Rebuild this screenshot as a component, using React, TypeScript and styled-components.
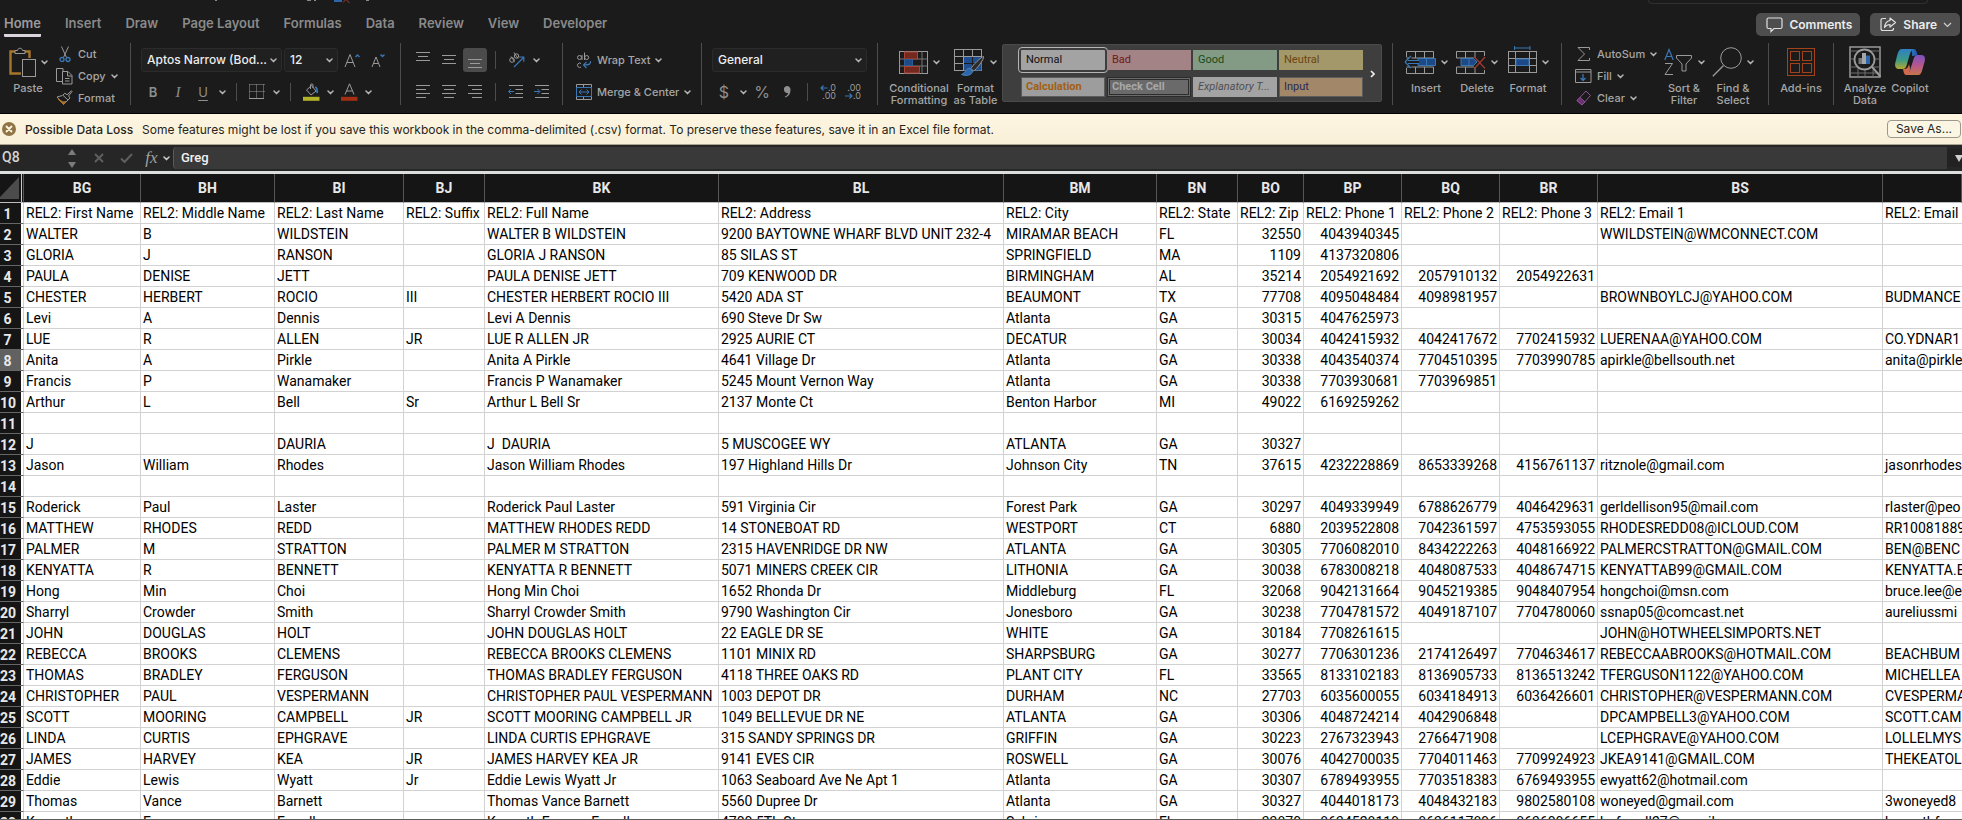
import React from "react";
import styled, { createGlobalStyle, css } from "styled-components";

const UI = `Inter, "Liberation Sans", sans-serif`;
const TEXT = `Roboto, "Liberation Sans", sans-serif`;
const LINE = "#9a9a9a";
const BLUE = "#3a77b5";
const FILL_BLUE = "#1d4a86";

const Global = createGlobalStyle`
  *, *::before, *::after { box-sizing: border-box; }
  html, body { margin: 0; height: 100%; overflow: hidden; background: #1b1b1b; }
  #root { height: 100%; }
  button, select, input { font: inherit; color: inherit; margin: 0; }
  svg { display: block; flex: none; }
`;

const Window = styled.div`
  display: flex;
  flex-direction: column;
  height: 100vh;
  overflow: hidden;
  background: #1b1b1b;
  color: #a6a6a6;
  font-family: ${UI};
`;

/* ---------- title strip and tabs ---------- */

const TitleStrip = styled.div`
  display: flex;
  flex: none;
  height: 4px;
  justify-content: space-between;
  align-items: flex-start;
`;

const SearchEdge = styled.div`
  width: 280px;
  height: 4px;
  margin-right: 34px;
  border: 1px solid #303030;
  border-top: 0;
  border-radius: 0 0 5px 5px;
`;

const TabBar = styled.nav`
  display: flex;
  flex: none;
  height: 39px;
  padding: 9px 2px 0 4px;
  align-items: flex-start;
`;

const TabList = styled.div`
  display: flex;
  gap: 24px;
  flex: 1;
`;

const Tab = styled.button<{ $active?: boolean }>`
  height: 24px;
  padding: 0;
  border: 0;
  border-bottom: 3px solid ${(p) => (p.$active ? "#d9d5da" : "transparent")};
  border-radius: 1px;
  background: none;
  font-size: 13px;
  line-height: 21px;
  font-weight: 600;
  color: ${(p) => (p.$active ? "#9c9a9c" : "#8a8a8a")};
`;

const HeaderButton = styled.button`
  display: flex;
  align-items: center;
  gap: 6px;
  height: 23px;
  margin-left: 10px;
  padding: 0 8px 0 10px;
  border: 0;
  border-radius: 5px;
  background: #4e4e4e;
  color: #ececec;
  font-size: 12px;
  font-weight: 600;
`;

/* ---------- ribbon ---------- */

const Ribbon = styled.div`
  display: flex;
  flex: none;
  height: 71px;
  border-bottom: 1px solid #000;
  overflow: hidden;
`;

const Group = styled.div<{ $w: number; $pl: number; $gap?: number; $last?: boolean }>`
  display: flex;
  flex: none;
  align-items: flex-start;
  width: ${(p) => p.$w}px;
  padding-left: ${(p) => p.$pl}px;
  gap: ${(p) => p.$gap ?? 0}px;
  height: 62px;
  border-right: 1px solid ${(p) => (p.$last ? "transparent" : "#4c4c4c")};
`;

const Rows = styled.div`
  display: flex;
  flex-direction: column;
  gap: 8px;
  padding-top: 5px;
`;

const Row = styled.div<{ $gap: number }>`
  display: flex;
  align-items: center;
  height: 24px;
  gap: ${(p) => p.$gap}px;
`;

const Stack = styled.div<{ $w: number }>`
  display: flex;
  flex-direction: column;
  flex: none;
  width: ${(p) => p.$w}px;
`;

const plainButton = css`
  padding: 0;
  border: 0;
  background: none;
`;

const BigButton = styled.button<{ $w: number }>`
  ${plainButton}
  display: flex;
  flex: none;
  flex-direction: column;
  align-items: center;
  width: ${(p) => p.$w}px;
  padding-top: 3px;
  font-size: 11px;
  font-weight: 500;
  line-height: 12px;
  color: #a6a6a6;
`;

const BigIcon = styled.span`
  display: flex;
  align-items: center;
  gap: 5px;
  height: 32px;
  margin-bottom: 4px;
`;

const MiniButton = styled.button<{ $h?: number }>`
  ${plainButton}
  display: flex;
  align-items: center;
  height: ${(p) => p.$h ?? 22}px;
  gap: 5px;
  font-size: 11px;
  font-weight: 500;
  white-space: nowrap;
  color: #a6a6a6;
`;

const MiniIcon = styled.span`
  display: flex;
  justify-content: center;
  width: 17px;
`;

const IconButton = styled.button<{ $on?: boolean }>`
  ${plainButton}
  display: flex;
  flex: none;
  align-items: center;
  justify-content: center;
  width: 24px;
  height: 24px;
  border-radius: 3px;
  background: ${(p) => (p.$on ? "#4b4b4b" : "none")};
`;

const ArrowButton = styled(IconButton)`
  width: 12px;
`;

const ThinLine = styled.span<{ $m: number }>`
  flex: none;
  width: 1px;
  height: 18px;
  margin: 0 ${(p) => p.$m}px;
  background: #4c4c4c;
`;

const Combo = styled.label<{ $w: number }>`
  position: relative;
  display: block;
  width: ${(p) => p.$w}px;
  height: 24px;
  svg {
    position: absolute;
    right: 5px;
    top: 10px;
  }
`;

const ComboSelect = styled.select`
  appearance: none;
  width: 100%;
  height: 24px;
  padding: 0 0 1px 5px;
  border: 1px solid #2b2b2b;
  border-radius: 3px;
  background: #202020;
  color: #ededed;
  font-size: 12px;
  font-weight: 500;
`;

const Glyph = styled.span<{ $size?: number; $bold?: boolean; $italic?: boolean; $line?: boolean }>`
  font-size: ${(p) => p.$size ?? 13}px;
  font-weight: ${(p) => (p.$bold ? 600 : 400)};
  font-style: ${(p) => (p.$italic ? "italic" : "normal")};
  font-family: ${(p) => (p.$italic ? `"Liberation Serif", serif` : UI)};
  text-decoration: ${(p) => (p.$line ? "underline" : "none")};
  text-underline-offset: 3px;
  color: #8f8f8f;
`;

const Gallery = styled.div`
  display: flex;
  flex: none;
  width: 380px;
  height: 58px;
  margin-top: 1px;
  padding: 5px 0 4px 18px;
  border: 1px solid #4a4a4a;
  border-radius: 2px;
  background: #3e3e3e;
`;

const Swatches = styled.div`
  display: grid;
  grid-template-columns: repeat(4, 84px);
  grid-auto-rows: 20px;
  gap: 7px 2px;
`;

const Swatch = styled.button<{ $bg: string; $fg: string; $kind?: "on" | "check" | "edge" }>`
  padding: 0 0 0 5px;
  border: 0;
  text-align: left;
  font-family: ${TEXT};
  font-size: 11px;
  line-height: 18px;
  white-space: nowrap;
  background: ${(p) => p.$bg};
  color: ${(p) => p.$fg};
  ${(p) => p.$kind === "on" && "outline: 1px solid #b5b5b5; outline-offset: 2px; border-radius: 1px;"}
  ${(p) => p.$kind === "edge" && "box-shadow: inset 0 0 0 1px #5c5c5c;"}
  ${(p) => p.$kind === "check" && "box-shadow: inset 0 0 0 1px #2c2c2c, inset 0 0 0 2px #6a6a6a, inset 0 0 0 3px #2c2c2c;"}
`;

const GalleryMore = styled.button`
  ${plainButton}
  display: flex;
  flex: 1;
  align-items: center;
  justify-content: center;
`;

/* ---------- message bar ---------- */

const Banner = styled.div`
  display: flex;
  flex: none;
  align-items: center;
  height: 31px;
  padding: 0 1px 0 2px;
  border-bottom: 1px solid #a9a38f;
  background: linear-gradient(#fdf5e0, #f8f0d8);
  color: #262521;
  font-size: 12px;
  white-space: nowrap;
`;

const BannerTitle = styled.span`
  margin: 0 9px;
  font-weight: 500;
`;

const BannerText = styled.span`
  flex: 1;
`;

const SaveAs = styled.button`
  width: 74px;
  height: 18px;
  padding: 0;
  border: 1px solid #9c988b;
  border-radius: 4px;
  background: #fbf5e4;
  font-size: 12px;
  line-height: 16px;
  color: #262521;
`;

/* ---------- formula bar ---------- */

const FormulaBar = styled.div`
  display: flex;
  flex: none;
  align-items: center;
  height: 26px;
  background: #262626;
  color: #e4e4e4;
  font-size: 12px;
  font-weight: 500;
`;

const NameBox = styled.input`
  width: 66px;
  height: 20px;
  padding: 0 0 2px 2px;
  border: 0;
  background: none;
  color: #d4d4d4;
  font-family: ${TEXT};
  font-size: 14px;
  outline: none;
`;

const Stepper = styled.button`
  ${plainButton}
  width: 12px;
  margin-right: 12px;
  display: flex;
  justify-content: center;
`;

const BarButton = styled.button<{ $w: number }>`
  ${plainButton}
  display: flex;
  align-items: center;
  justify-content: center;
  width: ${(p) => p.$w}px;
`;

const Fx = styled.span`
  font-family: "Liberation Serif", serif;
  font-style: italic;
  font-size: 17px;
  line-height: 20px;
  color: #a0a0a0;
`;

const FormulaInput = styled.input`
  flex: 1;
  min-width: 0;
  height: 22px;
  padding: 0 0 1px 7px;
  border: 0;
  border-left: 1px solid #5a5a5a;
  border-radius: 4px 0 0 4px;
  background: #393939;
  color: #f2f2f2;
  font-family: ${TEXT};
  font-size: 13px;
  font-weight: 500;
  outline: none;
`;

const Expand = styled.button`
  ${plainButton}
  display: flex;
  align-items: center;
  justify-content: flex-end;
  width: 15px;
  height: 18px;
  background: #222;
`;

/* ---------- grid ---------- */

const Sheet = styled.main`
  flex: 1;
  min-height: 0;
  overflow: hidden;
  border-top: 3px solid #dcdedd;
  border-bottom: 1px solid #5c5c5c;
  background: #fff;
`;

const Table = styled.table`
  table-layout: fixed;
  width: 100%;
  border-collapse: separate;
  border-spacing: 0;
  color: #000;
  font-family: ${TEXT};
  font-size: 14px;
  line-height: 18px;
`;

const Col = styled.col<{ $w?: number }>`
  width: ${(p) => (p.$w ? `${p.$w}px` : "auto")};
`;

const ColHead = styled.th`
  height: 29px;
  padding: 0;
  border-right: 1px solid #565656;
  border-bottom: 1px solid #bdbdbd;
  background: #151515;
  color: #e8e8e8;
  font-weight: 700;
`;

const Corner = styled(ColHead)`
  box-shadow: inset -1px 0 0 #151515, inset -2px 0 0 #c9c9c9;
`;

const RowHead = styled.th<{ $on: boolean }>`
  height: 21px;
  padding: 1px 8px 0 0;
  border-right: 1px solid #cfcfcf;
  border-bottom: 1px solid #666;
  background: ${(p) => (p.$on ? "#616161" : "#151515")};
  box-shadow: inset -2px 0 0 #fff;
  color: #e8e8e8;
  font-weight: 700;
  text-align: center;
`;

const Cell = styled.td<{ $num: boolean }>`
  height: 21px;
  padding: 1px 2px;
  border-right: 1px solid #d2d2d2;
  border-bottom: 1px solid #d2d2d2;
  background: #fff;
  overflow: hidden;
  white-space: pre;
  text-align: ${(p) => (p.$num ? "right" : "left")};
  &:last-child {
    border-right: 0;
    padding-right: 0;
  }
`;

/* ---------- icons ---------- */

const Svg = ({ w, h, children }: { w: number; h: number; children: React.ReactNode }) => (
  <svg width={w} height={h} viewBox={`0 0 ${w} ${h}`} fill="none" stroke={LINE} strokeWidth="1" aria-hidden="true">
    {children}
  </svg>
);

const Chevron = ({ color = "#b4b4b4" }: { color?: string }) => (
  <Svg w={7} h={5}>
    <path d="M1 1l2.5 2.6L6 1" stroke={color} strokeWidth="1.5" strokeLinecap="round" strokeLinejoin="round" />
  </Svg>
);

const PasteIcon = () => (
  <Svg w={27} h={31}>
    <path d="M12 26.500H1.500V4.500H6M16 4.500h4.500V11" stroke="#a8752c" strokeWidth="2.400" />
    <path d="M6 6.500V3.500h2.500c.3-3 4.700-3 5 0H16v3z" />
    <rect x="13.500" y="12.500" width="13" height="17" />
  </Svg>
);

const CutIcon = () => (
  <Svg w={12} h={17}>
    <path d="M2.500.5l5 11M9.500.5l-5 11" />
    <circle cx="3" cy="13.500" r="2" stroke={BLUE} strokeWidth="1.300" />
    <circle cx="9" cy="13.500" r="2" stroke={BLUE} strokeWidth="1.300" />
  </Svg>
);

const CopyIcon = () => (
  <Svg w={17} h={17}>
    <path d="M6 13.500H.5V.5h6.500v3" />
    <path d="M6.500 3.500h5.500l4 4v8.500H6.500zM11.500 3.500v4.500h4.500M9 10.500h4.500M9 13h4.500" />
  </Svg>
);

const FormatIcon = () => (
  <Svg w={17} h={16}>
    <path d="M15.500.8l-4.500 4-2.200-1.600-2 2L12 10l2-2-1.500-2 3.500-4.500z" />
    <path d="M6.500 5.500L1 7l6.500 7.500L12 10" />
    <path d="M2 9l5.500 5.500L10 11.500 7 12z" fill="#a8752c" stroke="#a8752c" />
  </Svg>
);

const GrowIcon = ({ up }: { up?: boolean }) => (
  <Svg w={17} h={15}>
    {up ? <path d="M1 14L6 1.500 11 14M2.800 9.500h6.400" /> : <path d="M2 14L6 4l4 10M3.500 10.500h5" />}
    {up ? <path d="M11.500 4l2-2 2 2" stroke={BLUE} strokeWidth="1.300" /> : <path d="M10.500 1.500l2 2 2-2" stroke={BLUE} strokeWidth="1.300" />}
  </Svg>
);

const BordersIcon = () => (
  <Svg w={16} h={16}>
    <path d="M.5.5h15M.5 7.500h15M.5.5v14M7.500.5v14M14.500.5v14" strokeDasharray="1 1" />
    <path d="M0 14.500h15" />
  </Svg>
);

const BucketIcon = () => (
  <Svg w={17} h={18}>
    <path d="M3.500 7l5-4.500 4.500 5.500-5 4L3.500 7zM7.500 6V2c0-1.500 2.500-1.500 2.500 0v3" />
    <path d="M12 4c2 .5 2.500 2.500 2 6" stroke={BLUE} strokeWidth="1.800" />
    <path d="M0 15.800h16.500" stroke="#b3b228" strokeWidth="4" />
  </Svg>
);

const FontColorIcon = () => (
  <Svg w={17} h={18}>
    <path d="M4 11.500L8.500.8 13 11.500M5.500 8h6" />
    <path d="M0 15.800h16.500" stroke="#a32f14" strokeWidth="4" />
  </Svg>
);

const LinesIcon = ({ rows }: { rows: number[][] }) => (
  <Svg w={15} h={18}>
    {rows.map(([x1, x2, y]) => (
      <path key={y} d={`M${x1} ${y}H${x2}`} />
    ))}
  </Svg>
);

const OrientIcon = () => (
  <Svg w={17} h={16}>
    <circle cx="4" cy="8" r="2.300" />
    <path d="M3 4.500l3.500 5M6 .5l4 6" />
    <circle cx="8.500" cy="4" r="2.200" />
    <path d="M6 15L15.500 5.500M11 5h4.800v4.800" stroke={BLUE} strokeWidth="1.200" />
  </Svg>
);

const IndentIcon = ({ right }: { right?: boolean }) => (
  <Svg w={16} h={14}>
    <path d="M1 .5h14M7.500 4.500H15M7.500 8.500H15M1 12.500h14" />
    {right ? <path d="M0 6.500h5.500M3.500 4l2.500 2.500L3.500 9" stroke={BLUE} /> : <path d="M6 6.500H.8M3 4L.5 6.500 3 9" stroke={BLUE} />}
  </Svg>
);

const WrapIcon = () => (
  <Svg w={16} h={17}>
    <circle cx="3.500" cy="5.500" r="2" />
    <path d="M6 3v5M8.500.5V8M5 11.500a2.200 2.200 0 1 0 0 3.500" />
    <circle cx="10.700" cy="5.500" r="2" />
    <path d="M14.500 9c.5 3-1 4-6.500 4M10.500 10L7.500 13l3 3" stroke={BLUE} strokeWidth="1.200" />
  </Svg>
);

const MergeIcon = () => (
  <Svg w={16} h={16}>
    <path d="M.5 3.500V.5h15v3M.5 12.500v3h15v-3M7.500.5v3M7.500 12.500v3" />
    <rect x=".5" y="3.500" width="15" height="9" stroke={BLUE} />
    <path d="M3 8h10M5.500 5.500L3 8l2.500 2.500M10.500 5.500L13 8l-2.500 2.500" stroke={BLUE} />
  </Svg>
);

const DecimalStack = styled.span`
  display: grid;
  grid-template-columns: 8px 8px;
  font-size: 9px;
  line-height: 8px;
  text-align: right;
  color: #9a9a9a;
`;

const DecimalWide = styled.span`
  grid-column: 1 / 3;
`;

const DecimalIcon = ({ more }: { more?: boolean }) => {
  const arrow = (
    <Svg w={8} h={8}>
      {more ? <path d="M7.500 4H1M3.500 1.500L1 4l2.500 2.500" stroke={BLUE} strokeWidth="1.200" /> : <path d="M0 4h7M4.500 1.500L7 4 4.500 6.500" stroke={BLUE} strokeWidth="1.200" />}
    </Svg>
  );
  return (
    <DecimalStack>
      {more ? (
        <>
          {arrow}
          <span>.0</span>
          <DecimalWide>.00</DecimalWide>
        </>
      ) : (
        <>
          <DecimalWide>.00</DecimalWide>
          {arrow}
          <span>.0</span>
        </>
      )}
    </DecimalStack>
  );
};

const CondIcon = () => (
  <Svg w={29} h={23}>
    <rect x=".5" y=".5" width="28" height="22" />
    <path d="M.5 8h28M.5 15h28M5.500.5v22M23 .5v22" stroke="#777" />
    <rect x="5.500" y="1" width="13" height="7" fill="#74291f" stroke="#a5453a" />
    <rect x="5.500" y="8.500" width="8" height="6" fill={FILL_BLUE} stroke="#2d5f97" />
    <rect x="5.500" y="15.500" width="15" height="6.500" fill="#74291f" stroke="#a5453a" />
  </Svg>
);

const TableStyleIcon = () => (
  <Svg w={31} h={28}>
    <rect x=".5" y="1.500" width="27" height="21" />
    <path d="M.5 8.500h27M.5 15.500h27M9.500 1.500v21M18.500 1.500v21" />
    <rect x="10" y="9" width="17.500" height="13.500" fill="#1f4f91" stroke="none" />
    <path d="M10 15.500h17M18.500 9v13" stroke="#1b1b1b" />
    <path d="M29.500 8.500c-2 0-12 10-12.500 12l2.500 2.500c3-1.500 11-12 10-14.500z" fill="#2a2a2a" />
    <path d="M16 20.500c-4-1-4 4.500-8.500 6 5 2 11 .5 11-3.500z" fill="#2c66a8" stroke="#4a86c4" />
  </Svg>
);

const InsertCellsIcon = () => (
  <Svg w={32} h={23}>
    <path d="M2.500 6V.5h27V7M2.500 17v5.500h27V16M11.500.5V7M20.500.5V7M11.500 16v6.500M20.500 16v6.500M2.500 7h27M2.500 16h27" />
    <path d="M14 7.500h17.500v7H14z" fill={FILL_BLUE} stroke={BLUE} />
    <path d="M22.500 7.500v7" stroke={BLUE} />
    <path d="M1.500 11l6-6v4.500H15v3H7.500V17z" fill="#1b1b1b" stroke="none" />
    <path d="M15 9.500H4M15 12.500H4M1 11l6-6M1 11l6 6" stroke={BLUE} strokeWidth="1.200" />
  </Svg>
);

const DeleteCellsIcon = () => (
  <Svg w={30} h={23}>
    <path d="M.5 7V.5h28V5M.5 16v6.500h28V19M9.500.5V7M19 .5V7M9.500 16v6.500M19 16v6.500M.5 7H18M.5 16H18" />
    <path d="M5 7.500h12.500L21 11l-3.500 3.500H5z" fill={FILL_BLUE} stroke={BLUE} />
    <path d="M13 7.500v7" stroke={BLUE} />
    <path d="M18.500 6L29 17.500M29 6L18.500 17.500" stroke="#a0392f" strokeWidth="1.300" />
  </Svg>
);

const FormatCellsIcon = () => (
  <Svg w={29} h={32}>
    <path d="M6.500 0v4M22 0v4M6.500 2H22" stroke={BLUE} />
    <rect x=".5" y="5.500" width="28" height="21" />
    <path d="M.5 12.500h28M.5 19.500h28M7.500 5.500v21M21.500 5.500v21" />
    <rect x="8" y="13" width="13" height="6.500" fill={FILL_BLUE} stroke={BLUE} />
  </Svg>
);

const SigmaIcon = () => (
  <Svg w={14} h={15}>
    <path d="M12.500 3V.5H1L7.500 7 1 13.500h11.500V11" />
  </Svg>
);

const FillIcon = () => (
  <Svg w={17} h={14}>
    <path d="M.5.5h15.500v13H.5zM.5 3h15.500" />
    <path d="M8 5v6.500M5.500 9L8 11.500 10.500 9" stroke={BLUE} strokeWidth="1.300" />
  </Svg>
);

const ClearIcon = () => (
  <Svg w={16} h={16}>
    <path d="M1 10.500L10 1l4.500 4.500L6 15z" stroke="#8a5690" />
    <path d="M1 10.500L4 7.500l5 4.500L6 15z" fill="#6b2f72" stroke="#8a5690" />
  </Svg>
);

const SortIcon = () => (
  <Svg w={29} h={28}>
    <path d="M.8 12L5 1.500 9.200 12M2.300 8.500h5.400" stroke={BLUE} strokeWidth="1.200" />
    <path d="M1 15.500h7.500L1 26.500h8" />
    <path d="M12.500 7.500h15v2.500l-5.500 6V23h-4v-7l-5.500-6z" />
  </Svg>
);

const FindIcon = () => (
  <Svg w={30} h={30}>
    <circle cx="19" cy="11" r="10.300" />
    <path d="M11.500 18.500L.8 29.200" strokeWidth="1.300" />
  </Svg>
);

const AddInsIcon = () => (
  <Svg w={28} h={28}>
    <g stroke="#a34218">
      <rect x=".5" y=".5" width="27" height="27" />
      <rect x="3.500" y="3.500" width="9" height="9" />
      <rect x="15.500" y="3.500" width="9" height="9" />
      <rect x="3.500" y="15.500" width="9" height="9" />
      <rect x="15.500" y="15.500" width="9" height="9" />
    </g>
  </Svg>
);

const AnalyzeIcon = () => (
  <Svg w={32} h={32}>
    <path d="M1 1h30v30H1z" strokeWidth="1.500" />
    <path d="M1 5h30M1 13h5M25 13h6M1 21h8M22 21h9M1 27h30M9 21v10M16 24v7M24 24v7" stroke="#6e6e6e" />
    <circle cx="15.500" cy="13.500" r="10" fill="#1b1b1b" strokeWidth="1.800" />
    <path d="M23 21l8.500 9.500" strokeWidth="2" />
    <rect x="9.500" y="12" width="3.500" height="6" fill="#777" stroke="none" />
    <rect x="13" y="7" width="4" height="11" fill="#a5a5a5" stroke="none" />
    <rect x="17" y="9.500" width="4" height="8.500" fill="#2c66a8" stroke="none" />
  </Svg>
);

const CopilotIcon = () => (
  <svg width="30" height="27" viewBox="0 0 30 27" aria-hidden="true">
    <defs>
      <linearGradient id="cpA" x1="0" y1="0" x2="0" y2="1">
        <stop offset="0" stopColor="#2f7fc6" />
        <stop offset=".55" stopColor="#3c9a86" />
        <stop offset="1" stopColor="#b5a92f" />
      </linearGradient>
      <linearGradient id="cpB" x1="0" y1="0" x2="0" y2="1">
        <stop offset="0" stopColor="#7a52c0" />
        <stop offset=".5" stopColor="#b4568f" />
        <stop offset="1" stopColor="#c9764a" />
      </linearGradient>
      <linearGradient id="cpC" x1="0" y1="0" x2="1" y2="0">
        <stop offset="0" stopColor="#2f7fc6" />
        <stop offset="1" stopColor="#1d3f9c" />
      </linearGradient>
    </defs>
    <path d="M7 0h12c-3 1-4 4-5 8l-2 7c-1 4-2 5-5 5H4c-4 0-4.500-3-3.500-7l2-8C3.500 2 4.500 0 7 0z" fill="url(#cpA)" />
    <path d="M15 0h3c3 0 3.500 2 4.500 6H26l-9 1c1-4-1-7-2-7z" fill="url(#cpC)" />
    <path d="M23 26H11c3-1 4-4 5-8l2-6c1-4 2-6 5-6h3c4 0 4.500 3 3.500 7l-2 7c-1 4-2 6-4.500 6z" fill="url(#cpB)" />
    <path d="M15 26h-3c-3 0-3-2-4-6 4 0 5-1 6-5l1 4c0 3-1 6 0 7z" fill="#cf6b4c" />
  </svg>
);

const CommentIcon = () => (
  <Svg w={17} h={16}>
    <path d="M2.500 1h12c1 0 1.500.5 1.500 1.500v7.500c0 1-.5 1.500-1.500 1.500H8L5 14.500v-3H2.500C1.500 11.500 1 11 1 10V2.500C1 1.500 1.500 1 2.500 1z" stroke="#e0e0e0" strokeWidth="1.200" />
  </Svg>
);

const ShareIcon = () => (
  <Svg w={17} h={15}>
    <g stroke="#e0e0e0" strokeWidth="1.200" strokeLinejoin="round">
      <path d="M6 1.500H3C1.500 1.500 1 2 1 3.500v8C1 13 1.500 13.500 3 13.500h8.500c1.500 0 2-.5 2-2V11" />
      <path d="M10 1l5.500 4.500L10 10V7.500C7.500 7.500 6 8.500 4.500 10.500 5 6 7 4 10 3.500z" />
    </g>
  </Svg>
);

const CloseBadge = () => (
  <svg width="14" height="14" viewBox="0 0 14 14" aria-hidden="true">
    <circle cx="7" cy="7" r="7" fill="#8f7546" />
    <path d="M4.500 4.500l5 5M9.500 4.500l-5 5" stroke="#fff6e0" strokeWidth="1.800" strokeLinecap="round" />
  </svg>
);

/* ---------- data ---------- */

/* The last column takes whatever width is left in the window. */
const COLUMNS: [string, number?][] = [
  ["BG", 117], ["BH", 134], ["BI", 129], ["BJ", 81], ["BK", 234], ["BL", 285], ["BM", 153],
  ["BN", 81], ["BO", 66], ["BP", 98], ["BQ", 98], ["BR", 98], ["BS", 285], [""],
];

const DATA: string[] = [
  "REL2: First Name|REL2: Middle Name|REL2: Last Name|REL2: Suffix|REL2: Full Name|REL2: Address|REL2: City|REL2: State|REL2: Zip|REL2: Phone 1|REL2: Phone 2|REL2: Phone 3|REL2: Email 1|REL2: Email",
  "WALTER|B|WILDSTEIN||WALTER B WILDSTEIN|9200 BAYTOWNE WHARF BLVD UNIT 232-4|MIRAMAR BEACH|FL|32550|4043940345|||WWILDSTEIN@WMCONNECT.COM|",
  "GLORIA|J|RANSON||GLORIA J RANSON|85 SILAS ST|SPRINGFIELD|MA|1109|4137320806||||",
  "PAULA|DENISE|JETT||PAULA DENISE JETT|709 KENWOOD DR|BIRMINGHAM|AL|35214|2054921692|2057910132|2054922631||",
  "CHESTER|HERBERT|ROCIO|III|CHESTER HERBERT ROCIO III|5420 ADA ST|BEAUMONT|TX|77708|4095048484|4098981957||BROWNBOYLCJ@YAHOO.COM|BUDMANCE",
  "Levi|A|Dennis||Levi A Dennis|690 Steve Dr Sw|Atlanta|GA|30315|4047625973||||",
  "LUE|R|ALLEN|JR|LUE R ALLEN JR|2925 AURIE CT|DECATUR|GA|30034|4042415932|4042417672|7702415932|LUERENAA@YAHOO.COM|CO.YDNAR1",
  "Anita|A|Pirkle||Anita A Pirkle|4641 Village Dr|Atlanta|GA|30338|4043540374|7704510395|7703990785|apirkle@bellsouth.net|anita@pirkle",
  "Francis|P|Wanamaker||Francis P Wanamaker|5245 Mount Vernon Way|Atlanta|GA|30338|7703930681|7703969851|||",
  "Arthur|L|Bell|Sr|Arthur L Bell Sr|2137 Monte Ct|Benton Harbor|MI|49022|6169259262||||",
  "|||||||||||||",
  "J||DAURIA||J  DAURIA|5 MUSCOGEE WY|ATLANTA|GA|30327|||||",
  "Jason|William|Rhodes||Jason William Rhodes|197 Highland Hills Dr|Johnson City|TN|37615|4232228869|8653339268|4156761137|ritznole@gmail.com|jasonrhodes",
  "|||||||||||||",
  "Roderick|Paul|Laster||Roderick Paul Laster|591 Virginia Cir|Forest Park|GA|30297|4049339949|6788626779|4046429631|gerldellison95@mail.com|rlaster@peo",
  "MATTHEW|RHODES|REDD||MATTHEW RHODES REDD|14 STONEBOAT RD|WESTPORT|CT|6880|2039522808|7042361597|4753593055|RHODESREDD08@ICLOUD.COM|RR10081889",
  "PALMER|M|STRATTON||PALMER M STRATTON|2315 HAVENRIDGE DR NW|ATLANTA|GA|30305|7706082010|8434222263|4048166922|PALMERCSTRATTON@GMAIL.COM|BEN@BENC",
  "KENYATTA|R|BENNETT||KENYATTA R BENNETT|5071 MINERS CREEK CIR|LITHONIA|GA|30038|6783008218|4048087533|4048674715|KENYATTAB99@GMAIL.COM|KENYATTA.B",
  "Hong|Min|Choi||Hong Min Choi|1652 Rhonda Dr|Middleburg|FL|32068|9042131664|9045219385|9048407954|hongchoi@msn.com|bruce.lee@e",
  "Sharryl|Crowder|Smith||Sharryl Crowder Smith|9790 Washington Cir|Jonesboro|GA|30238|7704781572|4049187107|7704780060|ssnap05@comcast.net|aureliussmi",
  "JOHN|DOUGLAS|HOLT||JOHN DOUGLAS HOLT|22 EAGLE DR SE|WHITE|GA|30184|7708261615|||JOHN@HOTWHEELSIMPORTS.NET|",
  "REBECCA|BROOKS|CLEMENS||REBECCA BROOKS CLEMENS|1101 MINIX RD|SHARPSBURG|GA|30277|7706301236|2174126497|7704634617|REBECCAABROOKS@HOTMAIL.COM|BEACHBUM",
  "THOMAS|BRADLEY|FERGUSON||THOMAS BRADLEY FERGUSON|4118 THREE OAKS RD|PLANT CITY|FL|33565|8133102183|8136905733|8136513242|TFERGUSON1122@YAHOO.COM|MICHELLEA",
  "CHRISTOPHER|PAUL|VESPERMANN||CHRISTOPHER PAUL VESPERMANN|1003 DEPOT DR|DURHAM|NC|27703|6035600055|6034184913|6036426601|CHRISTOPHER@VESPERMANN.COM|CVESPERMA",
  "SCOTT|MOORING|CAMPBELL|JR|SCOTT MOORING CAMPBELL JR|1049 BELLEVUE DR NE|ATLANTA|GA|30306|4048724214|4042906848||DPCAMPBELL3@YAHOO.COM|SCOTT.CAM",
  "LINDA|CURTIS|EPHGRAVE||LINDA CURTIS EPHGRAVE|315 SANDY SPRINGS DR|GRIFFIN|GA|30223|2767323943|2766471908||LCEPHGRAVE@YAHOO.COM|LOLLELMYS",
  "JAMES|HARVEY|KEA|JR|JAMES HARVEY KEA JR|9141 EVES CIR|ROSWELL|GA|30076|4042700035|7704011463|7709924923|JKEA9141@GMAIL.COM|THEKEATOL",
  "Eddie|Lewis|Wyatt|Jr|Eddie Lewis Wyatt Jr|1063 Seaboard Ave Ne Apt 1|Atlanta|GA|30307|6789493955|7703518383|6769493955|ewyatt62@hotmail.com|",
  "Thomas|Vance|Barnett||Thomas Vance Barnett|5560 Dupree Dr|Atlanta|GA|30327|4044018173|4048432183|9802580108|woneyed@gmail.com|3woneyed8",
  "Kenneth|Eugene|Farrell||Kenneth Eugene Farrell|4700 5Th St|Sebring|FL|33870|8634528119|8636117896|8636096655|bofarrell27@gmail.com|kennethfar",
];

const STYLES: { name: string; bg: string; fg: string; kind?: "on" | "check" | "edge"; bold?: boolean; italic?: boolean }[] = [
  { name: "Normal", bg: "#a3a3a3", fg: "#111", kind: "on" },
  { name: "Bad", bg: "#a38386", fg: "#6e1a14" },
  { name: "Good", bg: "#839a85", fg: "#1a4a16" },
  { name: "Neutral", bg: "#a3986a", fg: "#6b4512" },
  { name: "Calculation", bg: "#9d9d9d", fg: "#a35f14", kind: "edge", bold: true },
  { name: "Check Cell", bg: "#6a6a6a", fg: "#a8a8a8", kind: "check", bold: true },
  { name: "Explanatory T...", bg: "#a3a3a3", fg: "#4f4f4f", italic: true },
  { name: "Input", bg: "#a38769", fg: "#2a2a52", kind: "edge" },
];

const TABS = ["Home", "Insert", "Draw", "Page Layout", "Formulas", "Data", "Review", "View", "Developer"];

const Big = ({ w, icon, label, arrow = true }: { w: number; icon: React.ReactNode; label: string[]; arrow?: boolean }) => (
  <BigButton $w={w}>
    <BigIcon>
      {icon}
      {arrow && <Chevron />}
    </BigIcon>
    {label.map((line) => (
      <span key={line}>{line}</span>
    ))}
  </BigButton>
);

const Mini = ({ icon, label, arrow, h }: { icon: React.ReactNode; label: string; arrow?: boolean; h?: number }) => (
  <MiniButton $h={h}>
    <MiniIcon>{icon}</MiniIcon>
    <span>{label}</span>
    {arrow && <Chevron />}
  </MiniButton>
);

const Arrow = ({ label }: { label: string }) => (
  <ArrowButton aria-label={label}>
    <Chevron />
  </ArrowButton>
);

export default function App() {
  return (
    <Window>
      <Global />
      <TitleStrip>
        <svg width="400" height="4" viewBox="0 0 400 4" aria-hidden="true">
          <path d="M215 0h2M307 0h4M314 0h2M366 0h3" stroke="#8a8a8a" strokeWidth="2" />
          <path d="M334 0h8v2h-8z" fill="#2c66a8" />
          <path d="M343 2.500l3-3 3.500 3.500" stroke="#a0392f" fill="none" />
        </svg>
        <SearchEdge />
      </TitleStrip>
      <TabBar>
        <TabList>
          {TABS.map((t, i) => (
            <Tab key={t} $active={i === 0}>{t}</Tab>
          ))}
        </TabList>
        <HeaderButton>
          <CommentIcon />
          Comments
        </HeaderButton>
        <HeaderButton>
          <ShareIcon />
          Share
          <Svg w={9} h={6}>
            <path d="M1 1l3.500 3.500L8 1" stroke="#d0d0d0" strokeWidth="1.200" />
          </Svg>
        </HeaderButton>
      </TabBar>

      <Ribbon>
        <Group $w={131} $pl={4} $gap={4}>
          <Big w={48} icon={<PasteIcon />} label={["Paste"]} />
          <Stack $w={66}>
            <Mini icon={<CutIcon />} label="Cut" />
            <Mini icon={<CopyIcon />} label="Copy" arrow />
            <Mini icon={<FormatIcon />} label="Format" />
          </Stack>
        </Group>

        <Group $w={270} $pl={10}>
          <Rows>
            <Row $gap={2}>
              <Combo $w={141}>
                <ComboSelect aria-label="Font"><option>Aptos Narrow (Bod...</option></ComboSelect>
                <Chevron />
              </Combo>
              <Combo $w={54}>
                <ComboSelect aria-label="Font size"><option>12</option></ComboSelect>
                <Chevron />
              </Combo>
              <IconButton aria-label="Increase font size"><GrowIcon up /></IconButton>
              <IconButton aria-label="Decrease font size"><GrowIcon /></IconButton>
            </Row>
            <Row $gap={1}>
              <IconButton><Glyph $bold>B</Glyph></IconButton>
              <IconButton><Glyph $italic $size={15}>I</Glyph></IconButton>
              <IconButton><Glyph $line>U</Glyph></IconButton>
              <Arrow label="Underline options" />
              <ThinLine $m={7} />
              <IconButton aria-label="Borders"><BordersIcon /></IconButton>
              <Arrow label="Border options" />
              <ThinLine $m={7} />
              <IconButton aria-label="Fill color"><BucketIcon /></IconButton>
              <Arrow label="Fill color options" />
              <IconButton aria-label="Font color"><FontColorIcon /></IconButton>
              <Arrow label="Font color options" />
            </Row>
          </Rows>
        </Group>

        <Group $w={162} $pl={10}>
          <Rows>
            <Row $gap={2}>
              <IconButton aria-label="Align top"><LinesIcon rows={[[0, 14, 1.5], [2, 12, 5.5], [0, 14, 9.5]]} /></IconButton>
              <IconButton aria-label="Align middle"><LinesIcon rows={[[0, 14, 4.5], [2, 12, 8.5], [0, 14, 12.5]]} /></IconButton>
              <IconButton aria-label="Align bottom" $on><LinesIcon rows={[[0, 14, 8.5], [2, 12, 12.5], [0, 14, 16.5]]} /></IconButton>
              <ThinLine $m={6} />
              <IconButton aria-label="Orientation"><OrientIcon /></IconButton>
              <Arrow label="Orientation options" />
            </Row>
            <Row $gap={2}>
              <IconButton aria-label="Align left"><LinesIcon rows={[[0, 14, 2.5], [0, 10, 6.5], [0, 14, 10.5], [0, 10, 14.5]]} /></IconButton>
              <IconButton aria-label="Center"><LinesIcon rows={[[0, 14, 2.5], [2, 12, 6.5], [0, 14, 10.5], [2, 12, 14.5]]} /></IconButton>
              <IconButton aria-label="Align right"><LinesIcon rows={[[0, 14, 2.5], [4, 14, 6.5], [0, 14, 10.5], [4, 14, 14.5]]} /></IconButton>
              <ThinLine $m={6} />
              <IconButton aria-label="Decrease indent"><IndentIcon /></IconButton>
              <IconButton aria-label="Increase indent"><IndentIcon right /></IconButton>
            </Row>
          </Rows>
        </Group>

        <Group $w={139} $pl={12}>
          <Rows>
            <Mini h={24} icon={<WrapIcon />} label="Wrap Text" arrow />
            <Mini h={24} icon={<MergeIcon />} label="Merge & Center" arrow />
          </Rows>
        </Group>

        <Group $w={176} $pl={10}>
          <Rows>
            <Combo $w={155}>
              <ComboSelect aria-label="Number format"><option>General</option></ComboSelect>
              <Chevron />
            </Combo>
            <Row $gap={1}>
              <IconButton><Glyph $size={16}>$</Glyph></IconButton>
              <Arrow label="Currency options" />
              <IconButton><Glyph $size={16}>%</Glyph></IconButton>
              <IconButton aria-label="Comma style">
                <Svg w={8} h={12}>
                  <path d="M4 0a3.600 3.600 0 0 1 3.500 4c0 4-2 6.500-5.500 7.500v-1C4 9.500 5 8.500 5 7A3.500 3.500 0 1 1 4 0z" fill="#8f8f8f" stroke="none" />
                </Svg>
              </IconButton>
              <ThinLine $m={7} />
              <IconButton aria-label="Increase decimal"><DecimalIcon more /></IconButton>
              <IconButton aria-label="Decrease decimal"><DecimalIcon /></IconButton>
            </Row>
          </Rows>
        </Group>

        <Group $w={515} $pl={11}>
          <Big w={60} icon={<CondIcon />} label={["Conditional", "Formatting"]} />
          <Big w={53} icon={<TableStyleIcon />} label={["Format", "as Table"]} />
          <Gallery>
            <Swatches>
              {STYLES.map((s) => (
                <Swatch key={s.name} $bg={s.bg} $fg={s.fg} $kind={s.kind}>
                  {s.bold ? <b>{s.name}</b> : s.italic ? <i>{s.name}</i> : s.name}
                </Swatch>
              ))}
            </Swatches>
            <GalleryMore aria-label="More styles">
              <Svg w={5} h={8}>
                <path d="M1 1l3 3-3 3" stroke="#f0f0f0" strokeWidth="1.600" />
              </Svg>
            </GalleryMore>
          </Gallery>
        </Group>

        <Group $w={169} $pl={8} $gap={1}>
          <Big w={50} icon={<InsertCellsIcon />} label={["Insert"]} />
          <Big w={50} icon={<DeleteCellsIcon />} label={["Delete"]} />
          <Big w={50} icon={<FormatCellsIcon />} label={["Format"]} />
        </Group>

        <Group $w={207} $pl={13} $gap={1}>
          <Stack $w={84}>
            <Mini icon={<SigmaIcon />} label="AutoSum" arrow />
            <Mini icon={<FillIcon />} label="Fill" arrow />
            <Mini icon={<ClearIcon />} label="Clear" arrow />
          </Stack>
          <Big w={48} icon={<SortIcon />} label={["Sort &", "Filter"]} />
          <Big w={48} icon={<FindIcon />} label={["Find &", "Select"]} />
        </Group>

        <Group $w={65} $pl={8}>
          <Big w={48} icon={<AddInsIcon />} label={["Add-ins"]} arrow={false} />
        </Group>

        <Group $w={110} $pl={8} $last>
          <Big w={46} icon={<AnalyzeIcon />} label={["Analyze", "Data"]} arrow={false} />
          <Big w={44} icon={<CopilotIcon />} label={["Copilot"]} arrow={false} />
        </Group>
      </Ribbon>

      <Banner>
        <CloseBadge />
        <BannerTitle>Possible Data Loss</BannerTitle>
        <BannerText>
          Some features might be lost if you save this workbook in the comma-delimited (.csv) format. To preserve these
          features, save it in an Excel file format.
        </BannerText>
        <SaveAs>Save As...</SaveAs>
      </Banner>

      <FormulaBar>
        <NameBox aria-label="Name box" defaultValue="Q8" />
        <Stepper aria-label="Name box list">
          <svg width="8" height="19" viewBox="0 0 8 19" fill="#7c7c7c" aria-hidden="true">
            <path d="M0 6l4-6 4 6zM0 13l4 6 4-6z" />
          </svg>
        </Stepper>
        <BarButton $w={18} aria-label="Cancel">
          <Svg w={10} h={10}>
            <path d="M1 1l8 8M9 1L1 9" stroke="#5f5f5f" strokeWidth="2" />
          </Svg>
        </BarButton>
        <BarButton $w={36} aria-label="Enter">
          <Svg w={13} h={10}>
            <path d="M1 5.500L4.500 9 12 1" stroke="#5f5f5f" strokeWidth="2" />
          </Svg>
        </BarButton>
        <BarButton $w={15}><Fx>fx</Fx></BarButton>
        <BarButton $w={14} aria-label="Functions"><Chevron color="#cfcfcf" /></BarButton>
        <FormulaInput aria-label="Formula" defaultValue="Greg" />
        <Expand aria-label="Expand formula bar">
          <svg width="7" height="7" viewBox="0 0 7 7" fill="#d0d0d0" aria-hidden="true">
            <path d="M0 0h8L4 7z" />
          </svg>
        </Expand>
      </FormulaBar>

      <Sheet>
        <Table>
          <colgroup>
            <Col $w={24} />
            {COLUMNS.map(([name, w]) => (
              <Col key={name} $w={w} />
            ))}
          </colgroup>
          <thead>
            <tr>
              <Corner aria-label="Select all">
                <svg width="19" height="22" viewBox="0 0 19 22" fill="#4c4c4c" aria-hidden="true">
                  <path d="M19 0v22H0v-2z" />
                </svg>
              </Corner>
              {COLUMNS.map(([name]) => (
                <ColHead key={name} scope="col">{name}</ColHead>
              ))}
            </tr>
          </thead>
          <tbody>
            {DATA.map((line, r) => (
              <tr key={r}>
                <RowHead scope="row" $on={r === 7}>{r + 1}</RowHead>
                {line.split("|").map((v, c) => (
                  <Cell key={c} $num={r > 0 && c > 7 && c < 12}>{v}</Cell>
                ))}
              </tr>
            ))}
          </tbody>
        </Table>
      </Sheet>
    </Window>
  );
}
